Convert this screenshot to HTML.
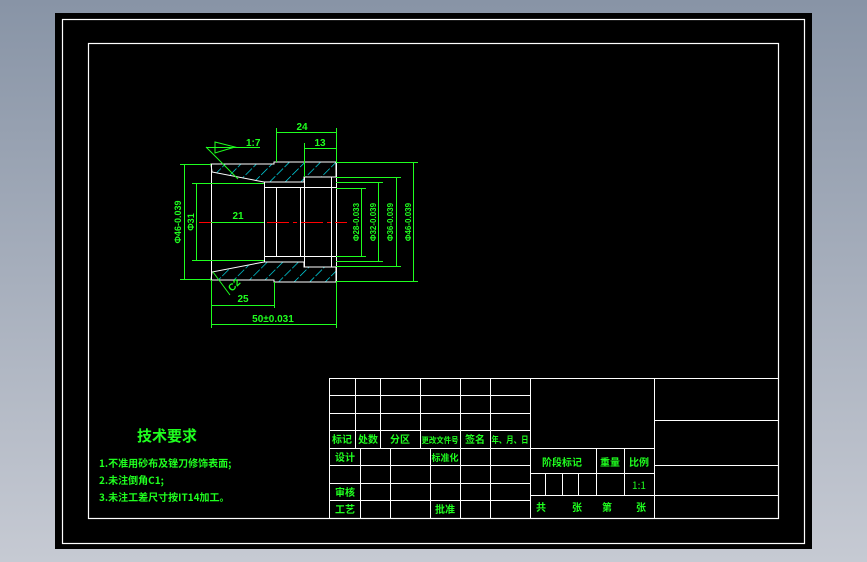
<!DOCTYPE html>
<html><head><meta charset="utf-8"><style>
html,body{margin:0;padding:0;}
body{width:867px;height:562px;background:linear-gradient(#8894a6,#c6cad3);position:relative;overflow:hidden;font-family:"Liberation Sans","Noto Sans CJK SC",sans-serif;}
svg{position:absolute;left:0;top:0;}
</style></head><body>
<svg width="867" height="562" viewBox="0 0 867 562" xmlns="http://www.w3.org/2000/svg">
<defs>
<pattern id="h" patternUnits="userSpaceOnUse" width="11" height="11" patternTransform="rotate(45)">
<line x1="0" y1="0" x2="0" y2="11" stroke="#00f0ff" stroke-width="1.3" stroke-dasharray="5 2"/>
</pattern>
</defs>
<rect x="55" y="13" width="757" height="536" fill="#000"/>
<rect x="62.5" y="19.5" width="742" height="524" fill="none" stroke="#fff" stroke-width="1.2"/>
<rect x="88.5" y="43.5" width="690" height="475" fill="none" stroke="#fff" stroke-width="1.2"/>

<g stroke="#fff" stroke-width="1" fill="none">
<rect x="329.5" y="378.5" width="449" height="140"/>
<line x1="329" y1="395.5" x2="530" y2="395.5"/>
<line x1="329" y1="413.5" x2="530" y2="413.5"/>
<line x1="329" y1="430.5" x2="530" y2="430.5"/>
<line x1="329" y1="448.5" x2="655" y2="448.5"/>
<line x1="329" y1="465.5" x2="530" y2="465.5"/>
<line x1="329" y1="483.5" x2="530" y2="483.5"/>
<line x1="329" y1="500.5" x2="530" y2="500.5"/>
<line x1="355.5" y1="378" x2="355.5" y2="448"/>
<line x1="380.5" y1="378" x2="380.5" y2="448"/>
<line x1="420.5" y1="378" x2="420.5" y2="448"/>
<line x1="460.5" y1="378" x2="460.5" y2="518"/>
<line x1="490.5" y1="378" x2="490.5" y2="518"/>
<line x1="530.5" y1="378" x2="530.5" y2="518"/>
<line x1="360.5" y1="448" x2="360.5" y2="518"/>
<line x1="390.5" y1="448" x2="390.5" y2="518"/>
<line x1="430.5" y1="448" x2="430.5" y2="518"/>
<line x1="654.5" y1="378" x2="654.5" y2="518"/>
<line x1="530" y1="473.5" x2="654" y2="473.5"/>
<line x1="530" y1="495.5" x2="779" y2="495.5"/>
<line x1="596.5" y1="448" x2="596.5" y2="495"/>
<line x1="624.5" y1="448" x2="624.5" y2="495"/>
<line x1="545.5" y1="473" x2="545.5" y2="495"/>
<line x1="562.5" y1="473" x2="562.5" y2="495"/>
<line x1="578.5" y1="473" x2="578.5" y2="495"/>
<line x1="654" y1="420.5" x2="779" y2="420.5"/>
<line x1="654" y1="465.5" x2="779" y2="465.5"/>
</g>
<g fill="#1fff1f" font-size="10" font-weight="bold" font-family="'Noto Sans CJK SC',sans-serif" text-anchor="middle">
<text x="342" y="443">标记</text><text x="368" y="443">处数</text><text x="400" y="443">分区</text>
<text x="440" y="443" font-size="8" textLength="37" lengthAdjust="spacingAndGlyphs">更改文件号</text><text x="475" y="443">签名</text>
<text x="510" y="443" font-size="9" textLength="37" lengthAdjust="spacingAndGlyphs">年、月、日</text>
<text x="345" y="461">设计</text><text x="445" y="461" font-size="9">标准化</text>
<text x="345" y="496">审核</text><text x="345" y="513">工艺</text><text x="445" y="513">批准</text>
<text x="562" y="466">阶段标记</text><text x="610" y="466">重量</text><text x="639" y="466">比例</text>
<text x="639" y="489" font-weight="normal">1:1</text>
<text x="541" y="511">共</text><text x="577" y="511">张</text><text x="607" y="511">第</text><text x="641" y="511">张</text>
</g>
<g fill="#1fff1f" font-weight="bold" font-family="'Noto Sans CJK SC',sans-serif">
<text x="137" y="441" font-size="15">技术要求</text>
<text x="99" y="467" font-size="10">1.不准用砂布及锉刀修饰表面;</text>
<text x="99" y="484" font-size="10">2.未注倒角C1;</text>
<text x="99" y="501" font-size="10">3.未注工差尺寸按IT14加工。</text>
</g>

<polygon points="211,164 274,164 274,162 336,162 336,177 304,177 304,182 264,182 212,172" fill="url(#h)" stroke="#fff" stroke-width="1"/>
<polygon points="211,280 274,280 274,282 336,282 336,267 304,267 304,262 264,262 212,272" fill="url(#h)" stroke="#fff" stroke-width="1"/>
<g stroke="#fff" stroke-width="1" fill="none">
<line x1="211.5" y1="164" x2="211.5" y2="280"/>
<line x1="336.5" y1="162" x2="336.5" y2="282"/>
<line x1="264.5" y1="182" x2="264.5" y2="262"/>
<line x1="276.5" y1="187" x2="276.5" y2="257"/>
<line x1="300.5" y1="187" x2="300.5" y2="257"/>
<line x1="304.5" y1="177" x2="304.5" y2="267"/>
<line x1="331.5" y1="177" x2="331.5" y2="267"/>
<line x1="264" y1="187.5" x2="336" y2="187.5"/>
<line x1="264" y1="256.5" x2="336" y2="256.5"/>
</g>
<line x1="199" y1="222.5" x2="347" y2="222.5" stroke="#f00" stroke-width="1" stroke-dasharray="22 4 4 4"/>
<g stroke="#1fff1f" stroke-width="1" fill="none">
<line x1="180" y1="164.5" x2="211" y2="164.5"/><line x1="180" y1="279.5" x2="211" y2="279.5"/>
<line x1="184.5" y1="164" x2="184.5" y2="280"/>
<line x1="192" y1="183.5" x2="264" y2="183.5"/><line x1="192" y1="260.5" x2="264" y2="260.5"/>
<line x1="196.5" y1="183" x2="196.5" y2="261"/>
<line x1="211" y1="222.5" x2="264" y2="222.5"/>
<line x1="336" y1="188.5" x2="366" y2="188.5"/><line x1="336" y1="256.5" x2="366" y2="256.5"/>
<line x1="361.5" y1="188" x2="361.5" y2="257"/>
<line x1="336" y1="182.5" x2="383" y2="182.5"/><line x1="336" y1="261.5" x2="383" y2="261.5"/>
<line x1="378.5" y1="182" x2="378.5" y2="262"/>
<line x1="336" y1="177.5" x2="401" y2="177.5"/><line x1="336" y1="266.5" x2="401" y2="266.5"/>
<line x1="396.5" y1="177" x2="396.5" y2="267"/>
<line x1="336" y1="162.5" x2="418" y2="162.5"/><line x1="336" y1="281.5" x2="418" y2="281.5"/>
<line x1="413.5" y1="162" x2="413.5" y2="282"/>
<line x1="276.5" y1="128" x2="276.5" y2="162"/><line x1="336.5" y1="128" x2="336.5" y2="162"/>
<line x1="276" y1="132.5" x2="336" y2="132.5"/>
<line x1="304.5" y1="143" x2="304.5" y2="177"/>
<line x1="304" y1="148.5" x2="336" y2="148.5"/>
<line x1="206" y1="147.5" x2="260" y2="147.5"/>
<polygon points="215,142 235,147 215,153"/>
<line x1="206" y1="147" x2="238" y2="179"/>
<line x1="274.5" y1="282" x2="274.5" y2="308"/>
<line x1="211.5" y1="280" x2="211.5" y2="328"/><line x1="336.5" y1="282" x2="336.5" y2="328"/>
<line x1="211" y1="305.5" x2="274" y2="305.5"/>
<line x1="211" y1="324.5" x2="336" y2="324.5"/>
<line x1="213" y1="272" x2="230" y2="295"/>
</g>
<g fill="#1fff1f" font-family="'Liberation Sans Narrow','Liberation Sans',sans-serif" font-size="10" font-weight="bold">
<text x="302" y="130" text-anchor="middle">24</text>
<text x="320" y="146" text-anchor="middle">13</text>
<text x="246" y="146">1:7</text>
<text x="238" y="219" text-anchor="middle">21</text>
<text x="243" y="302" text-anchor="middle">25</text>
<text x="273" y="322" text-anchor="middle">50±0.031</text>
<text x="232" y="292" transform="rotate(-45 232 292)">C2</text>
<text transform="translate(181 222) rotate(-90)" text-anchor="middle" font-size="9">Φ46-0.039</text>
<text transform="translate(194 222) rotate(-90)" text-anchor="middle" font-size="9">Φ31</text>
<text transform="translate(359 222) rotate(-90)" text-anchor="middle" font-size="8">Φ28-0.033</text>
<text transform="translate(376 222) rotate(-90)" text-anchor="middle" font-size="8">Φ32-0.039</text>
<text transform="translate(393 222) rotate(-90)" text-anchor="middle" font-size="8">Φ36-0.039</text>
<text transform="translate(411 222) rotate(-90)" text-anchor="middle" font-size="8">Φ46-0.039</text>
</g>
</svg>
</body></html>
